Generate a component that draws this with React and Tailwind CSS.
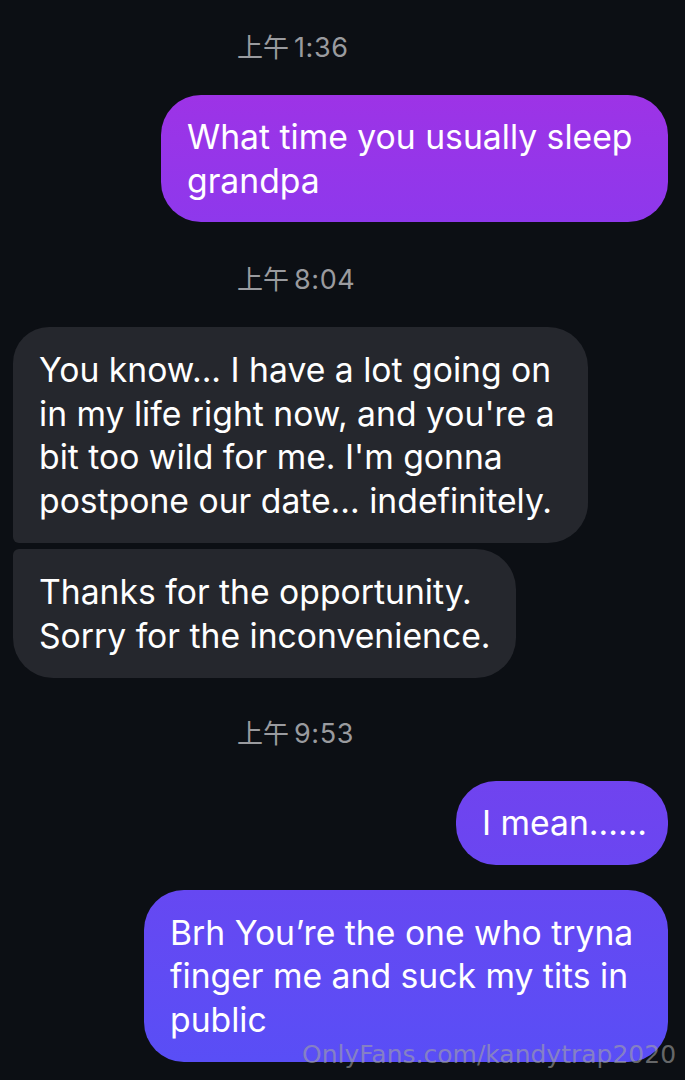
import React from 'react';

function Stamp({ time, className = 'mt-[42px]' }) {
    return (
        <div className={`${className} mb-[32px] h-[30px] pl-[237px] flex items-center gap-[5px] text-[#9a9b9f] font-['Inter','Noto_Sans_CJK_SC',sans-serif]`}>
            <span className="text-[26px] leading-[30px]">上午</span>
            <span className="text-[27px] leading-[30px] tracking-[0.6px]">{time}</span>
        </div>
    );
}

function Mine({ lines, className = '' }) {
    return (
        <div className={`self-end mr-[17px] rounded-[40px] px-[26px] py-[20px] text-white text-[33.7px] leading-[43.5px] whitespace-nowrap ${className}`}>
            {lines.map((l, i) => <div key={i}>{l}</div>)}
        </div>
    );
}

function Theirs({ lines, className = '' }) {
    return (
        <div className={`self-start ml-[13px] bg-[#25272d] px-[26px] text-white text-[33.7px] leading-[43.5px] whitespace-nowrap ${className}`}>
            {lines.map((l, i) => <div key={i}>{l}</div>)}
        </div>
    );
}

export default function App() {
    return (
        <div className="relative w-[685px] h-[1080px] overflow-hidden bg-[#0c0f14] flex flex-col font-['Inter','Noto_Sans_CJK_SC',sans-serif]">
            <Stamp time="1:36" className="mt-[33px]" />
            <Mine
                lines={['What time you usually sleep', 'grandpa']}
                className="w-[507px] bg-gradient-to-b from-[#9d33e6] to-[#8e38ec]"
            />

            <Stamp time="8:04" className="mt-[43px]" />
            <Theirs
                lines={['You know... I have a lot going on', "in my life right now, and you're a", "bit too wild for me. I'm gonna", 'postpone our date... indefinitely.']}
                className="w-[575px] py-[21px] rounded-tl-[36px] rounded-tr-[40px] rounded-br-[40px] rounded-bl-[6px]"
            />
            <Theirs
                lines={['Thanks for the opportunity.', 'Sorry for the inconvenience.']}
                className="w-[503px] mt-[6px] py-[21px] rounded-tl-[6px] rounded-tr-[40px] rounded-br-[40px] rounded-bl-[40px]"
            />

            <Stamp time="9:53" className="mt-[41px]" />
            <Mine
                lines={['I mean......']}
                className="w-[212px] px-[25px] bg-gradient-to-b from-[#7043ef] to-[#6a46f1]"
            />
            <Mine
                lines={['Brh You’re the one who tryna', 'finger me and suck my tits in', 'public']}
                className="w-[524px] mt-[25px] py-[21px] bg-gradient-to-b from-[#6648f2] to-[#594ef6]"
            />

            <div className="absolute left-[302px] top-[1040px] text-[25px] leading-[30px] text-[#a3a3a3]/60 font-['DejaVu_Sans',sans-serif]">
                OnlyFans.com/kandytrap2020
            </div>
        </div>
    );
}
